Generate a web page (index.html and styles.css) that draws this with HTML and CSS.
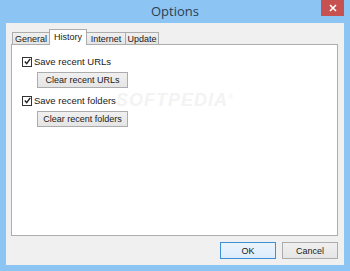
FILE: index.html
```html
<!DOCTYPE html>
<html>
<head>
<meta charset="utf-8">
<link rel="stylesheet" href="styles.css">
</head>
<body>
<div class="window">
  <div class="titlebar">
    <div class="title">Options</div>
    <div class="close">
      <svg width="8" height="8" viewBox="0 0 8 8"><path d="M1 1L7 7M7 1L1 7" stroke="#fff" stroke-width="1.6"/></svg>
    </div>
  </div>
  <div class="client">
    <div class="tabs">
      <div class="tab t-general">General</div>
      <div class="tab active t-history">History</div>
      <div class="tab t-internet">Internet</div>
      <div class="tab t-update">Update</div>
    </div>
    <div class="panel">
      <div class="watermark">SOFTPEDIA<sup>®</sup></div>
      <label class="check"><span class="box"><svg width="7" height="7" viewBox="0 0 7 7"><path d="M0.8 3.6L2.7 5.6L6.2 0.8" fill="none" stroke="#222" stroke-width="1.4"/></svg></span>Save recent URLs</label>
      <div class="btn wide">Clear recent URLs</div>
      <label class="check second"><span class="box"><svg width="7" height="7" viewBox="0 0 7 7"><path d="M0.8 3.6L2.7 5.6L6.2 0.8" fill="none" stroke="#222" stroke-width="1.4"/></svg></span>Save recent folders</label>
      <div class="btn wide">Clear recent folders</div>
    </div>
    <div class="footer">
      <div class="btn dlg default">OK</div>
      <div class="btn dlg">Cancel</div>
    </div>
  </div>
</div>
</body>
</html>
```

FILE: styles.css
```css
* { box-sizing: border-box; }
html, body { margin: 0; padding: 0; }
body {
  width: 350px;
  height: 271px;
  background: #8cc4f4;
  font-family: "Liberation Sans", Arial, sans-serif;
  font-size: 9.5px;
  color: #1a1a1a;
  overflow: hidden;
}
.window {
  width: 350px;
  height: 271px;
  display: flex;
  flex-direction: column;
}
.titlebar {
  height: 23px;
  position: relative;
  display: flex;
  justify-content: center;
  align-items: center;
}
.title {
  font-family: "Open Sans", "Noto Sans", sans-serif;
  font-size: 13px;
  color: #2c3e50;
  margin-top: -1px;
}
.close {
  position: absolute;
  top: 0;
  left: 321px;
  width: 23px;
  height: 16px;
  background: #c75050;
  display: flex;
  align-items: center;
  justify-content: center;
}
.client {
  flex: 1;
  margin: 0 6px 6px 6px;
  background: #f0f0f0;
  padding: 6px 6px 6px 5px;
  display: flex;
  flex-direction: column;
}
.tabs {
  height: 15px;
  display: flex;
  align-items: flex-end;
  padding-left: 1px;
  position: relative;
  z-index: 1;
  font-size: 9px;
}
.tab {
  height: 12px;
  border: 1px solid #acacac;
  border-bottom: none;
  background: linear-gradient(#f0f0f0, #e5e5e5);
  display: flex;
  align-items: center;
  justify-content: center;
  padding-top: 1px;
  margin-right: -1px;
}
.tab.active {
  height: 16px;
  margin-bottom: -1px;
  background: #fff;
  padding-bottom: 2px;
}
.t-general { width: 38px; }
.t-history { width: 38px; }
.t-internet { width: 40px; }
.t-update { width: 34px; }
.panel {
  flex: 1;
  background: #fff;
  border: 1px solid #adadad;
  padding: 11px 10px 0 10px;
  position: relative;
  display: flex;
  flex-direction: column;
  align-items: flex-start;
}
.watermark {
  position: absolute;
  left: 104px;
  top: 45px;
  font-size: 18px;
  font-weight: bold;
  font-style: italic;
  letter-spacing: 1px;
  color: #f3f3f3;
}
.watermark sup { font-size: 7px; font-weight: normal; }
.check {
  display: flex;
  align-items: center;
  height: 11px;
  position: relative;
}
.check.second { margin-top: 7px; }
.box {
  width: 10px;
  height: 10px;
  border: 1px solid #333;
  background: #fff;
  margin-right: 2px;
  display: flex;
  align-items: center;
  justify-content: center;
}
.btn {
  height: 16px;
  border: 1px solid #acacac;
  background: linear-gradient(#f0f0f0, #e5e5e5);
  display: flex;
  align-items: center;
  justify-content: center;
  position: relative;
  font-size: 9px;
}
.btn.wide {
  width: 91px;
  margin: 5px 0 0 15px;
}
.footer {
  height: 23px;
  display: flex;
  justify-content: flex-end;
  align-items: flex-end;
  gap: 6px;
}
.btn.dlg {
  width: 56px;
  height: 17px;
}
.btn.default {
  border-color: #3c8fd6;
  background: linear-gradient(#ecf4fc, #dcecfc);
}
```
